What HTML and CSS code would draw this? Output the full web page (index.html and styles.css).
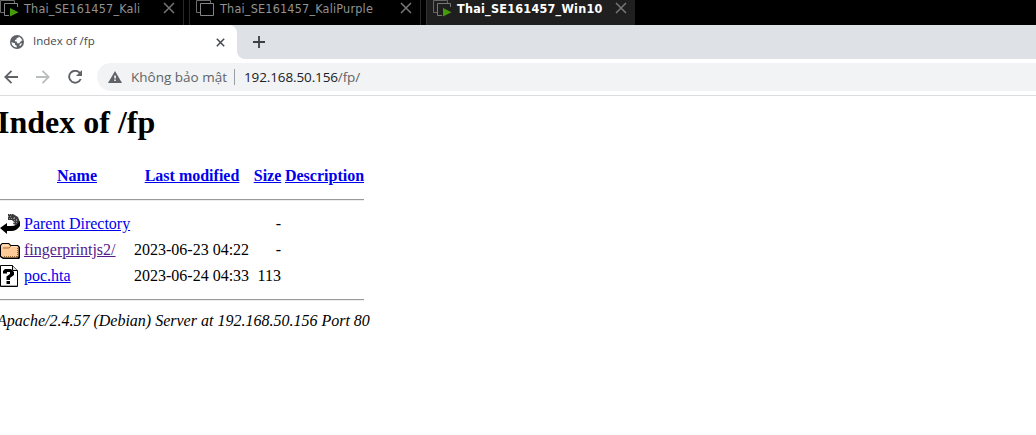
FILE: index.html
```
<!DOCTYPE html>
<html lang="vi">
<head>
<meta charset="utf-8">
<title>Index of /fp</title>
<link rel="stylesheet" href="styles.css">
</head>
<body>
<nav class="vm-tabs">
  <div class="vm-tab vm-kali">
    <svg class="vm-icon" width="20" height="20" viewBox="0 0 20 20"><path d="M14.500 3V.5H.5v12H4" fill="none" stroke="#6e6e6e"/><path d="M4.500 3.500h13v12h-13z" fill="#000" stroke="#858585"/><path d="M9 7h10v10H9z" fill="#000"/><path d="M10 8v8.500l8.500-4.250z" fill="#459b0a"/></svg>
    <span class="vm-name">Thai_SE161457_Kali</span>
    <svg class="vm-close" width="12" height="12" viewBox="0 0 12 12"><path d="M1 1l10 10M11 1L1 11"/></svg>
  </div>
  <div class="vm-tab vm-purple">
    <svg class="vm-icon" width="20" height="20" viewBox="0 0 20 20"><path d="M14.500 3V.5H.5v12H4" fill="none" stroke="#6e6e6e"/><path d="M4.500 3.500h13v12h-13z" fill="#000" stroke="#858585"/></svg>
    <span class="vm-name">Thai_SE161457_KaliPurple</span>
    <svg class="vm-close" width="12" height="12" viewBox="0 0 12 12"><path d="M1 1l10 10M11 1L1 11"/></svg>
  </div>
  <div class="vm-tab vm-win">
    <svg class="vm-icon" width="20" height="20" viewBox="0 0 20 20"><path d="M14.500 3V.5H.5v12H4" fill="none" stroke="#666"/><path d="M4.500 3.500h13v12h-13z" fill="#1f1f1f" stroke="#777"/><path d="M9 7h10v10H9z" fill="#1f1f1f"/><path d="M10 8v8.500l8.500-4.250z" fill="#459b0a"/></svg>
    <span class="vm-name">Thai_SE161457_Win10</span>
    <svg class="vm-close" width="12" height="12" viewBox="0 0 12 12"><path d="M1 1l10 10M11 1L1 11"/></svg>
  </div>
</nav>
<div class="tab-strip">
  <div class="page-tab">
    <svg class="globe" width="14" height="14" viewBox="0 0 14 14"><circle cx="7" cy="7" r="7" fill="#5f6368"/><path d="M1.500 7.300L5 8.200v1.600l1.700 1v1.700C3.800 12.400 1.600 10.200 1.500 7.300zM8.700 1.700c1.700.6 3 1.900 3.600 3.600L10.600 6.600 9.300 8.200H6.900L7 6.700l-2-.4V5l1.500-.6.200-1.500 1.600-.2zM10.500 8.500l1.500-.2c-.4 1.300-1.100 2.200-2.100 2.900l-.5-1.300z" fill="#fff"/></svg>
    <span class="page-title">Index of /fp</span>
    <svg class="page-close" width="9" height="9" viewBox="0 0 9 9"><path d="M.8.8l7.400 7.400M8.200.8L.8 8.200" stroke="#45494d" stroke-width="1.500"/></svg>
  </div>
  <div class="strip-rest">
    <svg width="12" height="12" viewBox="0 0 12 12"><path d="M6 0v12M0 6h12" stroke="#3c4043" stroke-width="1.800"/></svg>
  </div>
</div>
<div class="toolbar">
  <svg class="nav-back" width="14" height="14" viewBox="0 0 14 14"><path d="M14 7H1.500M7.500.8L1.300 7l6.200 6.200" fill="none" stroke="#5f6368" stroke-width="1.800"/></svg>
  <svg class="nav-forward" width="14" height="14" viewBox="0 0 14 14"><path d="M0 7h12.500M6.500.8L12.700 7l-6.200 6.200" fill="none" stroke="#babcbe" stroke-width="1.800"/></svg>
  <svg class="nav-reload" width="14" height="14" viewBox="0 0 14 14"><path d="M12 3.200A6 6 0 1 0 12.700 9" fill="none" stroke="#5f6368" stroke-width="1.900"/><path d="M14 0v6H8z" fill="#5f6368"/></svg>
  <div class="address">
    <svg class="warning" width="14" height="12" viewBox="0 0 14 12"><path d="M7 0l7 12H0z" fill="#5f6368"/><path d="M6.300 4.500h1.500v3H6.300zM6.300 8.600h1.500V10H6.300z" fill="#fff"/></svg>
    <span class="insecure">Không bảo mật</span>
    <span class="divider"></span>
    <span class="url">192.168.50.156<span class="path">/fp/</span></span>
  </div>
</div>
<main class="listing">
  <h1>Index of /fp</h1>
  <div class="row head">
    <span></span><a href="#">Name</a><a href="#">Last modified</a><a href="#">Size</a><a href="#">Description</a>
  </div>
  <hr>
  <div class="row">
    <svg width="20" height="22" viewBox="0 0 20 22"><path d="M8 1h5l5 3 2 5-4 3-3-1 1-2-2-2H8z" fill="#3b3b3b"/><path d="M9 1.500h4M8 3.500h4M9 5.500h5M12 7.500h4M14 9.500h3" stroke="#8c8c8c" stroke-dasharray="1 1"/><path d="M14 5h2M16 7h2" stroke="#ddd" stroke-dasharray="1 1"/><path d="M0 15l7-5v3h4c4 0 7-2 8.500-5l.5 1v4c-2 3-5 5-9 5H7v3z" fill="#000"/></svg>
    <a href="#">Parent Directory</a><span></span><span class="size">-</span>
  </div>
  <div class="row">
    <svg width="20" height="22" viewBox="0 0 20 22"><path d="M2 4h7l2 2h7l2 2v11l-1 1H3l-3-2V6z" fill="#000"/><path d="M2.500 5h6l2 2h7l1 1.500v9l-1 1h-14L1 17V6.500z" fill="#ffcc99"/><path d="M3 9h6l2-2" fill="none" stroke="#a36d37"/><path d="M2 6.500h6M11 7.500h6" fill="none" stroke="#ffe2c5"/><path d="M4 17.500h13M17.500 9v9" fill="none" stroke="#9b6832" stroke-dasharray="1 1"/></svg>
    <a class="visited" href="#">fingerprintjs2/</a><span class="date">2023-06-23 04:22</span><span class="size">-</span>
  </div>
  <div class="row">
    <svg width="20" height="22" viewBox="0 0 20 22"><path d="M.5.5h12l5 5v16H.5z" fill="#fff" stroke="#000"/><path d="M12.500.5v5h5" fill="#ddd" stroke="#000"/><path d="M1 20.500h16" stroke="#aaa"/><path d="M3 8.500V6l2-2h6l3 3v3l-4 3v2H6.500v-3.500L10 9V7H7v1.500zM6.500 16H10v3H6.500z" fill="#000"/></svg>
    <a href="#">poc.hta</a><span class="date">2023-06-24 04:33</span><span class="size">113</span>
  </div>
  <hr class="end">
  <address>Apache/2.4.57 (Debian) Server at 192.168.50.156 Port 80</address>
</main>
</body>
</html>
```
FILE: styles.css
```
* { box-sizing: border-box; }
body { margin: 0; background: #fff; overflow: hidden; }
svg { display: block; flex: none; }
span, a { white-space: nowrap; }
.vm-tabs { display: flex; height: 25px; background: #000; overflow: hidden; color: #929292; font: 12.500px/17px "DejaVu Sans Condensed", "DejaVu Sans", sans-serif; letter-spacing: .2px; }
.vm-tab { display: flex; height: 25px; flex: none; }
.vm-icon { width: 20px; margin-right: 4px; }
.vm-close { margin: 1.500px 0 0 auto; fill: none; stroke: #777; stroke-width: 1.500; }
.vm-kali { width: 184px; padding-right: 8px; border-right: 1px solid #292929; }
.vm-purple { width: 232px; margin-left: 5px; padding: 0 8px 0 6px; border: solid #292929; border-width: 0 1px; }
.vm-win { width: 209px; margin-left: 5px; padding: 0 8px 0 6px; background: #1f1f1f; border-left: 1px solid #333; color: #fff; font-weight: bold; letter-spacing: .24px; }
.tab-strip { display: flex; height: 34px; background: linear-gradient(#dee1e6 17px, #fff 17px); font-family: "Open Sans", sans-serif; }
.page-tab { display: flex; align-items: center; width: 237px; padding: 0 12px 0 10px; background: #fff; border-radius: 0 8px 0 0; }
.globe { margin-right: 9px; }
.page-title { color: #45494d; font-size: 11.500px; line-height: 16px; margin-top: -2px; }
.page-close { margin-left: auto; }
.strip-rest { flex: 1; display: flex; align-items: center; padding-left: 16px; background: #dee1e6; border-radius: 0 0 0 8px; }
.toolbar { display: flex; align-items: center; height: 37px; padding-left: 4px; border-bottom: 1px solid #dadce0; }
.nav-forward { margin-left: 18px; }
.nav-reload { margin-left: 18px; }
.address { flex: 1; display: flex; align-items: center; height: 28px; margin-left: 15px; padding-left: 11px; background: #f1f3f4; border-radius: 14px 0 0 14px; font: 13.500px/20px "Open Sans", sans-serif; }
.insecure { margin-left: 9px; color: #5f6368; }
.divider { width: 1px; height: 16px; margin: 0 9px 0 7px; background: #9b9ea2; }
.url { color: #202124; letter-spacing: -.12px; }
.path { color: #5f6368; }
.listing { font: 16px/18px "Liberation Serif", serif; color: #000; }
h1 { margin: 8px 0 0 -3px; font-size: 32px; line-height: 37px; }
.row { display: grid; grid-template-columns: 20px 106px 116px 27px 79px; column-gap: 4px; align-items: center; width: 364px; height: 26px; }
.head { height: 20px; margin-top: 25px; justify-items: center; font-weight: bold; }
a { color: #0000ee; }
.visited { color: #551a8b; }
.size { text-align: right; }
hr { width: 364px; height: 2px; margin: 13px 0 10px; border: solid; border-width: 1px 0; border-color: #9a9a9a #eee #eee #9a9a9a; }
.end { margin: 10px 0 11px; }
address { margin-left: -3px; font-style: italic; white-space: nowrap; }
```
